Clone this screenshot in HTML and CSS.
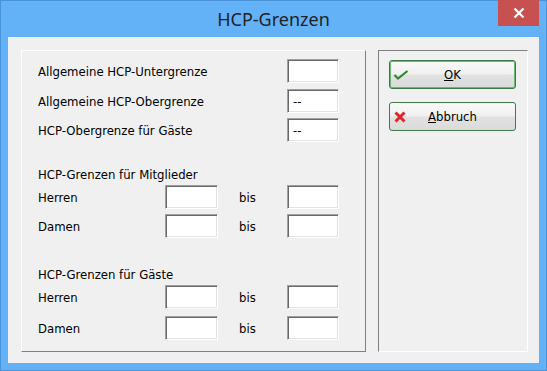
FILE: index.html
```html
<!DOCTYPE html>
<html lang="de">
<head>
  <meta charset="UTF-8" />
  <title>HCP-Grenzen</title>
  <link rel="stylesheet" href="styles.css">
</head>
<body>
  <div class="window">
    <div class="titlebar">
      <span class="title">HCP-Grenzen</span>
      <button class="close-button" aria-label="Schließen">
        <svg width="12" height="10" viewBox="0 0 12 10">
          <path d="M1.5 0.5L10.5 9.5M10.5 0.5L1.5 9.5" stroke="#fff" stroke-width="2.2"/>
        </svg>
      </button>
    </div>
    <div class="client">
      <div class="panel panel-fields">
        <div class="row row-wide">
          <span class="label">Allgemeine HCP-Untergrenze</span>
          <div class="field"></div>
        </div>
        <div class="row row-wide row-gap6">
          <span class="label">Allgemeine HCP-Obergrenze</span>
          <div class="field">--</div>
        </div>
        <div class="row row-wide">
          <span class="label">HCP-Obergrenze für Gäste</span>
          <div class="field">--</div>
        </div>

        <div class="heading heading-first">HCP-Grenzen für Mitglieder</div>
        <div class="row row-first">
          <span class="label">Herren</span>
          <div class="field field-from"></div>
          <span class="bis">bis</span>
          <div class="field"></div>
        </div>
        <div class="row">
          <span class="label">Damen</span>
          <div class="field field-from"></div>
          <span class="bis">bis</span>
          <div class="field"></div>
        </div>

        <div class="heading">HCP-Grenzen für Gäste</div>
        <div class="row row-first">
          <span class="label">Herren</span>
          <div class="field field-from"></div>
          <span class="bis">bis</span>
          <div class="field"></div>
        </div>
        <div class="row row-last">
          <span class="label">Damen</span>
          <div class="field field-from"></div>
          <span class="bis">bis</span>
          <div class="field"></div>
        </div>
      </div>

      <div class="panel panel-buttons">
        <button class="dlg-button default-button">
          <svg class="btn-icon" width="16" height="12" viewBox="0 0 16 12">
            <path d="M1.5 6L5 9.5L14.5 2" fill="none" stroke="#2f8a2f" stroke-width="2.2"/>
          </svg>
          <span><u>O</u>K</span>
        </button>
        <button class="dlg-button">
          <svg class="btn-icon" width="14" height="14" viewBox="0 0 14 14">
            <path d="M2.5 2.5L11.5 11.5M11.5 2.5L2.5 11.5" stroke="#e3262a" stroke-width="3"/>
          </svg>
          <span><u>A</u>bbruch</span>
        </button>
      </div>
    </div>
  </div>
</body>
</html>
```

FILE: styles.css
```css
body {
  margin: 0;
  font-family: 'DejaVu Sans Condensed', 'Liberation Sans', sans-serif;
  font-size: 13px;
  color: #000;
}
.window {
  width: 547px;
  height: 371px;
  box-sizing: border-box;
  background-color: #63b2f8;
  box-shadow: inset 0 0 0 1px #4a93d8;
  padding: 0 8px 8px;
  display: flex;
  flex-direction: column;
}
.titlebar {
  height: 37px;
  flex: none;
  position: relative;
  display: flex;
  align-items: center;
  justify-content: center;
}
.title {
  font-family: 'Noto Sans', 'Open Sans', sans-serif;
  font-size: 18px;
  color: #222;
  padding-top: 1px;
}
.close-button {
  position: absolute;
  top: 0;
  right: 0;
  width: 41px;
  height: 26px;
  border: none;
  padding: 0;
  background-color: #c75050;
  display: flex;
  align-items: center;
  justify-content: center;
}
.client {
  flex: 1;
  background-color: #f0f0f0;
  padding: 13px 11px 11px 13px;
  display: flex;
  gap: 12px;
}
.panel {
  box-sizing: border-box;
  border: 1px solid;
}
.panel-fields {
  width: 345px;
  border-color: #fff #808080 #808080 #fff;
  padding: 8px 26px 0 16px;
}
.panel-buttons {
  flex: 1;
  border-color: #808080 #fff #fff #808080;
  padding: 9px 0 0 10px;
  display: flex;
  flex-direction: column;
  gap: 13px;
}
.row {
  display: flex;
  align-items: center;
  height: 24px;
  margin-top: 5px;
}
.row-wide:first-child {
  margin-top: 0;
}
.row-gap6 {
  margin-top: 6px;
}
.row-first {
  margin-top: 2px;
}
.row-last {
  margin-top: 7px;
}
.label {
  width: 127px;
  flex: none;
}
.row-wide .label {
  flex: 1;
}
.field {
  width: 52px;
  height: 24px;
  box-sizing: border-box;
  flex: none;
  background-color: #fff;
  border: 1px solid;
  border-color: #a0a0a0 #fff #fff #a0a0a0;
  box-shadow: inset 1px 1px 0 #696969, inset -1px -1px 0 #e3e3e3;
  padding: 0 0 0 5px;
  display: flex;
  align-items: center;
}
.field-from {
  width: 53px;
}
.bis {
  width: 48px;
  margin-left: 21px;
  flex: none;
}
.heading {
  height: 16px;
  line-height: 16px;
  margin-top: 29px;
}
.heading-first {
  margin-top: 25px;
}
.dlg-button {
  width: 127px;
  height: 29px;
  box-sizing: border-box;
  border: 1px solid #3f7a4a;
  border-radius: 3px;
  background: linear-gradient(#fafafa, #f0f0f0 48%, #e2e2e2 52%, #dadada);
  font: inherit;
  font-size: 13px;
  color: #000;
  position: relative;
  display: flex;
  align-items: center;
  justify-content: center;
  padding: 0;
}
.default-button {
  border-color: #3a7c45;
  box-shadow: inset 0 0 0 1px #68b874;
}
.btn-icon {
  position: absolute;
  left: 3px;
  top: 50%;
  transform: translateY(-50%);
}
```
